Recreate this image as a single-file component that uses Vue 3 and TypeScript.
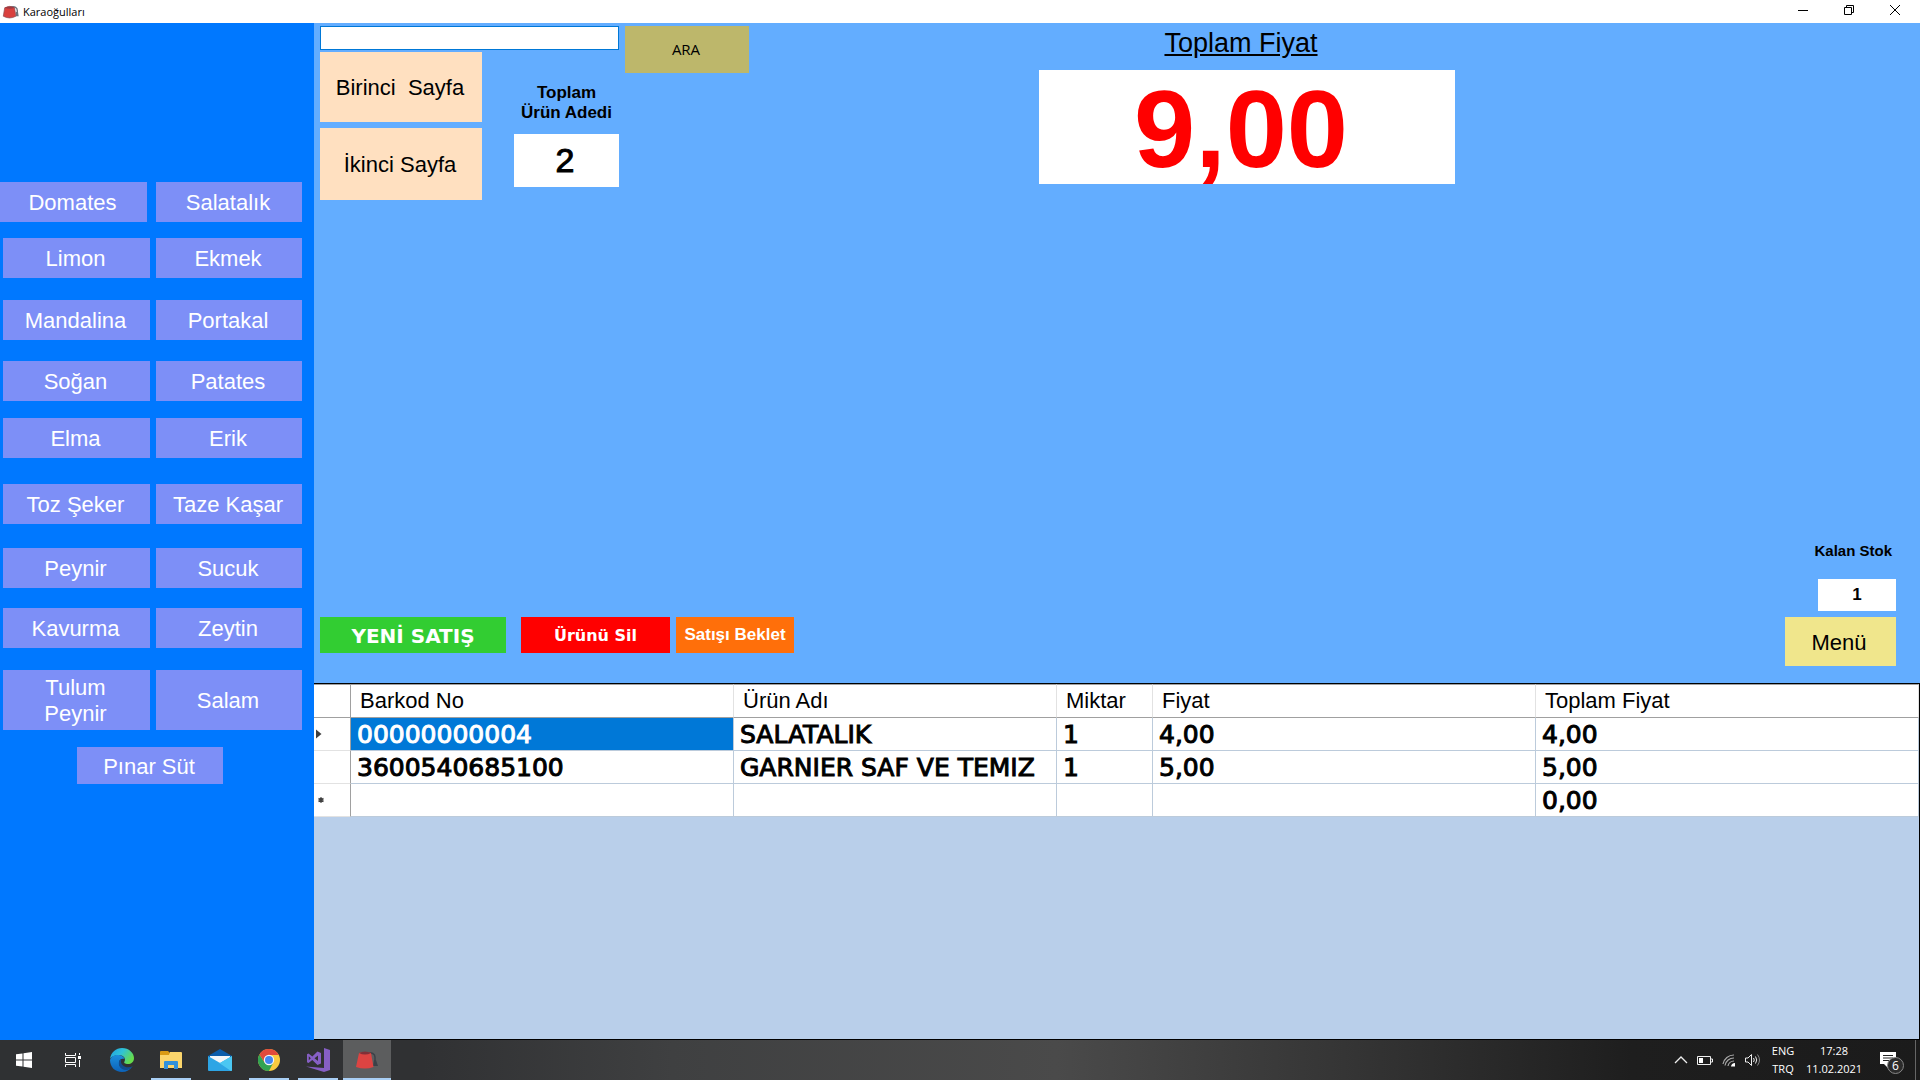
<script setup lang="ts">
import { ref } from 'vue'

interface ProductRow {
  space: number
  items: string[]
  kind?: string
}

interface SaleLine {
  marker: 'current' | 'new' | ''
  barcode: string
  name: string
  quantity: string
  price: string
  total: string
}

const search = ref('')
const itemCount = ref('2')
const grandTotal = ref('9,00')
const stock = ref('1')

const productRows: ProductRow[] = [
  { space: 0, items: ['Domates', 'Salatalık'], kind: 'flush' },
  { space: 16, items: ['Limon', 'Ekmek'] },
  { space: 22, items: ['Mandalina', 'Portakal'] },
  { space: 21, items: ['Soğan', 'Patates'] },
  { space: 17, items: ['Elma', 'Erik'] },
  { space: 26, items: ['Toz Şeker', 'Taze Kaşar'] },
  { space: 24, items: ['Peynir', 'Sucuk'] },
  { space: 20, items: ['Kavurma', 'Zeytin'] },
  { space: 22, items: ['Tulum Peynir', 'Salam'], kind: 'tall' },
  { space: 17, items: ['Pınar Süt'], kind: 'single' },
]

const lines: SaleLine[] = [
  { marker: 'current', barcode: '00000000004', name: 'SALATALIK', quantity: '1', price: '4,00', total: '4,00' },
  { marker: '', barcode: '3600540685100', name: 'GARNIER SAF VE TEMIZ', quantity: '1', price: '5,00', total: '5,00' },
  { marker: 'new', barcode: '', name: '', quantity: '', price: '', total: '0,00' },
]
</script>

<template>
  <div class="desktop">
    <header class="titlebar">
      <svg width="18" height="14" viewBox="0 0 24 20" aria-hidden="true">
        <path d="M11 3Q21 1 21 8V12" fill="none" stroke="#6b747d" stroke-width="2" />
        <path d="M19 10H22L23 16H19Z" fill="#6b747d" />
        <path d="M3 4Q10 0 17 4L19 16Q10 21 1 16Z" fill="#d9403e" stroke="#8b4a50" stroke-width="1" />
        <path d="M3 4Q10 0 17 4Q10 7 3 4Z" fill="#9c3b42" />
      </svg>
      <span class="title">Karaoğulları</span>
      <div class="window-controls">
        <button type="button" aria-label="Simge durumuna küçült">
          <svg width="10" height="10" viewBox="0 0 10 10"><path d="M0 5.5H10" stroke="#000" /></svg>
        </button>
        <button type="button" aria-label="Önceki boyut">
          <svg width="10" height="10" viewBox="0 0 10 10"><path d="M.5 2.5h7v7h-7zM2.5 2.5V.5h7v7h-2" fill="none" stroke="#000" /></svg>
        </button>
        <button type="button" aria-label="Kapat">
          <svg width="10" height="10" viewBox="0 0 10 10"><path d="M0 0L10 10M10 0L0 10" stroke="#000" /></svg>
        </button>
      </div>
    </header>

    <div class="workspace">
      <nav class="products">
        <div
          v-for="row in productRows"
          :key="row.items[0]"
          class="product-row"
          :class="row.kind"
          :style="{ marginTop: row.space + 'px' }"
        >
          <button v-for="item in row.items" :key="item" type="button" class="product">{{ item }}</button>
        </div>
      </nav>

      <main class="main">
        <section class="panel">
          <div class="panel-top">
            <div class="lookup">
              <input v-model="search" class="search" type="text" aria-label="Ürün ara" />
              <div class="lookup-body">
                <div class="pages">
                  <button type="button" class="page">Birinci&nbsp; Sayfa</button>
                  <button type="button" class="page second">İkinci Sayfa</button>
                </div>
                <div class="count">
                  <label for="item-count">Toplam<br />Ürün Adedi</label>
                  <input id="item-count" v-model="itemCount" type="text" readonly />
                </div>
              </div>
            </div>
            <button type="button" class="find">ARA</button>
            <div class="total">
              <label for="grand-total">Toplam Fiyat</label>
              <input id="grand-total" v-model="grandTotal" type="text" readonly />
            </div>
          </div>

          <div class="panel-bottom">
            <div class="actions">
              <button type="button" class="new-sale">YENİ SATIŞ</button>
              <button type="button" class="remove">Ürünü Sil</button>
              <button type="button" class="hold">Satışı Beklet</button>
            </div>
            <div class="stock">
              <label for="stock">Kalan Stok</label>
              <input id="stock" v-model="stock" type="text" readonly />
              <button type="button" class="menu">Menü</button>
            </div>
          </div>
        </section>

        <section class="grid-area">
          <table class="grid">
            <colgroup>
              <col class="col-marker" />
              <col />
              <col class="col-name" />
              <col class="col-quantity" />
              <col />
              <col />
            </colgroup>
            <thead>
              <tr>
                <th class="marker"></th>
                <th>Barkod No</th>
                <th>Ürün Adı</th>
                <th>Miktar</th>
                <th>Fiyat</th>
                <th>Toplam Fiyat</th>
              </tr>
            </thead>
            <tbody>
              <tr v-for="(line, index) in lines" :key="index">
                <td class="marker">
                  <svg v-if="line.marker === 'current'" width="10" height="10" viewBox="0 0 10 10"><path d="M0 0.500L5.500 5L0 9.500Z" fill="#404040" /></svg>
                  <svg v-if="line.marker === 'new'" width="10" height="10" viewBox="0 0 10 10">
                    <path d="M5 2.200V7.800M2.500 3.500L7.500 6.500M7.500 3.500L2.500 6.500" stroke="#404040" stroke-width="1.500" />
                  </svg>
                </td>
                <td :class="{ selected: index === 0 }">{{ line.barcode }}</td>
                <td>{{ line.name }}</td>
                <td>{{ line.quantity }}</td>
                <td>{{ line.price }}</td>
                <td>{{ line.total }}</td>
              </tr>
            </tbody>
          </table>
        </section>
      </main>
    </div>

    <footer class="taskbar">
      <button type="button" class="task" aria-label="Başlat">
        <svg width="16" height="16" viewBox="0 0 16 16"><path d="M0 2.300L6.500 1.400V7.500H0ZM7.500 1.200L16 0V7.500H7.500ZM0 8.500H6.500V14.600L0 13.700ZM7.500 8.500H16V16L7.500 14.800Z" fill="#fff" /></svg>
      </button>
      <button type="button" class="task" aria-label="Görev görünümü">
        <svg width="16" height="16" viewBox="0 0 16 16">
          <path d="M.5 1V3.500H10.500V1M.5 15V12.500H10.500V15M.5 5.500H10.500V10.500H.5ZM14.500 1V3M14.500 8V15" fill="none" stroke="#fff" />
          <rect x="13" y="4" width="3" height="3" fill="#fff" />
        </svg>
      </button>
      <button type="button" class="task" aria-label="Microsoft Edge">
        <svg width="24" height="24" viewBox="0 0 24 24">
          <defs>
            <linearGradient id="edge-top" x1="0" y1="0" x2="1" y2="0.500">
              <stop offset="0" stop-color="#1f9fe0" /><stop offset=".5" stop-color="#2fc2d8" /><stop offset="1" stop-color="#66dc4b" />
            </linearGradient>
            <linearGradient id="edge-low" x1="0" y1="0" x2="0" y2="1">
              <stop offset="0" stop-color="#1c8fdc" /><stop offset="1" stop-color="#0c62b8" />
            </linearGradient>
          </defs>
          <path d="M0 11C1 4 6 0 12 0C19 0 24 5 24 10C24 14 21 16 18 16C15 16 13.500 15 14.500 13.500C16 11 14 7 9 7C5 7 1 9 0 11Z" fill="url(#edge-top)" />
          <path d="M0 12C1 8.500 5 6.500 9 7C12 7.400 14 9 14.500 11C11 10 9 12 9 15C9 19 13 22 18 21C22 20 22 18.500 22.500 18.500C20 22 16.500 24 12 24C5 24 0 19 0 12Z" fill="url(#edge-low)" />
          <path d="M9.200 13C8 17 10 21 15 22C18 22.500 21 20.500 22.600 18.300C19 20 15 19.500 12.500 17C10.500 15 10.800 13 11.500 11.500C10 11.800 9.500 12.300 9.200 13Z" fill="#124c8e" />
        </svg>
      </button>
      <button type="button" class="task open" aria-label="Dosya Gezgini">
        <svg width="22" height="18" viewBox="0 0 22 18">
          <path d="M0 1Q0 0 1 0H8L10 2V5H0Z" fill="#d99a15" />
          <path d="M0 4H9L10 1H21Q22 1 22 2V17H0Z" fill="#fbd56c" />
          <path d="M4 18V11Q4 10 5 10H17Q18 10 18 11V18H14V14H8V18Z" fill="#3191db" />
        </svg>
      </button>
      <button type="button" class="task" aria-label="Posta">
        <svg width="24" height="22" viewBox="0 0 24 22">
          <path d="M0 7L12 0L24 7V10H0Z" fill="#0c5daa" />
          <path d="M2 7H22V15H2Z" fill="#f4f6f8" />
          <path d="M0 7L12 14L24 7V21Q24 22 23 22H1Q0 22 0 21Z" fill="#2da5e5" />
          <path d="M24 7V21Q24 22 23 22L9 12.500L12 14Z" fill="#4bc7f2" />
        </svg>
      </button>
      <button type="button" class="task open" aria-label="Google Chrome">
        <svg width="22" height="22" viewBox="0 0 22 22">
          <circle cx="11" cy="11" r="11" fill="#f9cb3f" />
          <path d="M1.470 5.500A11 11 0 0 0 11 22L15.330 13.500L11 11L6.670 13.500Z" fill="#31a352" />
          <path d="M11 6H20.700A11 11 0 0 0 1.470 5.500L6.670 13.500L11 11Z" fill="#e04a3c" />
          <circle cx="11" cy="11" r="5.200" fill="#f3f5f8" />
          <circle cx="11" cy="11" r="4" fill="#4286f0" />
        </svg>
      </button>
      <button type="button" class="task open" aria-label="Visual Studio">
        <svg width="24" height="24" viewBox="0 0 24 24">
          <path d="M18 0L24 2V22L18 24L0 18.500L18 20Z" fill="#865fc5" />
          <path d="M11.500 3.500L15 5V15.500L11.500 17L6.300 12L2.500 15L1 14.200V6.300L2.500 5.500L6.300 8.500ZM12 7.500L8.500 10.200L12 13ZM2.800 8.200V12.300L4.800 10.200Z" fill="#865fc5" fill-rule="evenodd" />
        </svg>
      </button>
      <button type="button" class="task open active" aria-label="Karaoğulları">
        <svg width="24" height="20" viewBox="0 0 24 20">
          <path d="M11 3Q20 2 20 7V12" fill="none" stroke="#3b4148" stroke-width="1.500" />
          <path d="M19 10H21L23 16H18Z" fill="#3b4148" />
          <path d="M4 3Q10 1 16 3L18.500 17Q10 20 1 17Z" fill="#dc4442" />
          <path d="M4 3Q10 0 16 3Q10 6 4 3Z" fill="#803038" />
        </svg>
      </button>

      <div class="tray">
        <svg width="14" height="10" viewBox="0 0 14 10"><path d="M1 8L7 2L13 8" fill="none" stroke="#eee" stroke-width="1.300" /></svg>
        <svg width="16" height="10" viewBox="0 0 16 10"><path d="M.5 1.500H13.500V9.500H.5ZM14 4H15.500V7H14" fill="none" stroke="#eee" /><rect x="2" y="3" width="4" height="5" fill="#fff" /></svg>
        <svg width="14" height="14" viewBox="0 0 14 14">
          <path d="M1 11A11 11 0 0 1 12 2M3 12.500A9 9 0 0 1 12 5M6 13A6 6 0 0 1 12 8" fill="none" stroke="#aaa" stroke-width="1.200" />
          <path d="M9 13.500A4 4 0 0 1 13 10V13.500Z" fill="#fff" />
        </svg>
        <svg width="16" height="14" viewBox="0 0 16 14">
          <path d="M.5 5H3L6.500 1.500V12.500L3 9H.5Z" fill="none" stroke="#eee" />
          <path d="M8.500 5Q10 7 8.500 9M10.500 3.500Q13 7 10.500 10.500" fill="none" stroke="#eee" />
          <path d="M12.500 1.500Q16.500 7 12.500 12.500" fill="none" stroke="#888" />
        </svg>
        <div class="tray-text language"><span>ENG</span><span>TRQ</span></div>
        <div class="tray-text clock"><span>17:28</span><span>11.02.2021</span></div>
        <div class="notice">
          <svg width="17" height="17" viewBox="0 0 17 17"><path d="M0 0H16V12H8V16L4 12H0Z" fill="#fff" /><path d="M3 3.500H13M3 6H13M3 8.500H9" stroke="#222" /></svg>
          <span class="badge">6</span>
        </div>
        <div class="show-desktop"></div>
      </div>
    </footer>
  </div>
</template>

<style>
body {
  margin: 0;
}
</style>

<style scoped>
.desktop {
  display: flex;
  flex-direction: column;
  min-height: 100vh;
  font-family: "Liberation Sans", Arial, sans-serif;
  color: #000;
}

.desktop *,
.desktop *::before {
  box-sizing: border-box;
}

button,
input {
  margin: 0;
  padding: 0;
  border: 0;
  border-radius: 0;
  font: inherit;
  color: inherit;
}

svg {
  display: block;
}

.titlebar {
  display: flex;
  align-items: center;
  height: 23px;
  padding: 0 2px;
  background: #fff;
  font: 11px/16px "Open Sans", "Noto Sans", sans-serif;
}

.title {
  margin-left: 3px;
}

.window-controls {
  display: flex;
  align-self: stretch;
  align-items: stretch;
  margin-left: auto;
}

.window-controls button {
  display: flex;
  justify-content: center;
  align-items: center;
  width: 46px;
  padding-bottom: 3px;
  background: none;
}

.workspace {
  display: flex;
  flex: 1;
}

.products {
  flex: none;
  width: 314px;
  padding-top: 159px;
  background: #0078ff;
}

.product-row {
  display: grid;
  grid-template-columns: 147px 146px;
  column-gap: 6px;
  grid-auto-rows: 40px;
  padding-left: 3px;
}

.product-row.flush {
  padding-left: 0;
  column-gap: 9px;
}

.product-row.tall {
  grid-auto-rows: 60px;
}

.product-row.single {
  grid-template-columns: 146px;
  grid-auto-rows: 37px;
  padding-left: 77px;
}

.product {
  padding: 2px 2px 0 0;
  background: #7d8ff7;
  color: #fff;
  font-size: 22px;
  line-height: 26px;
  white-space: nowrap;
}

.tall .product {
  padding: 2px 34px 0 32px;
  white-space: normal;
}

.main {
  display: flex;
  flex: 1;
  flex-direction: column;
  min-width: 0;
}

.panel {
  display: flex;
  flex: 640 1 0;
  flex-direction: column;
  justify-content: space-between;
  padding: 3px 24px 17px 6px;
  background: #63adff;
}

.panel-top {
  display: grid;
  grid-template-columns: 299px 124px 278fr 416px 435fr;
  column-gap: 6px;
  align-items: start;
}

.search {
  display: block;
  width: 100%;
  height: 24px;
  padding: 0 4px;
  border: 1px solid #0078d7;
  background: #fff;
  font-size: 16px;
}

.lookup-body {
  display: flex;
  justify-content: space-between;
  margin-top: 2px;
}

.pages {
  display: flex;
  flex-direction: column;
  gap: 6px;
  width: 162px;
}

.page {
  height: 70px;
  padding: 2px 2px 0 0;
  background: #ffe0c0;
  font-size: 22px;
}

.page.second {
  height: 72px;
}

.count {
  display: flex;
  flex-direction: column;
  gap: 11px;
  width: 105px;
  padding-top: 31px;
  text-align: center;
  font-size: 17px;
  font-weight: bold;
  line-height: 20px;
}

.count input {
  width: 100%;
  height: 53px;
  padding-right: 3px;
  background: #fff;
  font-size: 34px;
  font-weight: normal;
  text-align: center;
  -webkit-text-stroke: 1px #000;
}

.find {
  height: 47px;
  padding: 0 2px 2px 0;
  background: #bdb76b;
  font-family: "Open Sans", "Noto Sans", sans-serif;
  font-size: 15px;
}

.total {
  display: flex;
  grid-column: 4;
  flex-direction: column;
  gap: 10px;
  text-align: center;
}

.total label {
  padding-right: 12px;
  font-size: 27px;
  line-height: 34px;
  text-decoration: underline;
}

.total input {
  width: 100%;
  height: 114px;
  padding: 2px 12px 0 0;
  background: #fff;
  color: #f00;
  font-size: 110px;
  font-weight: bold;
  text-align: center;
}

.panel-bottom {
  display: flex;
  justify-content: space-between;
  align-items: flex-end;
}

.actions {
  display: flex;
  margin-bottom: 13px;
  color: #fff;
  font-weight: bold;
  white-space: nowrap;
}

.actions button {
  height: 36px;
}

.new-sale {
  width: 186px;
  padding-top: 2px;
  background: #32cd32;
  font-family: "DejaVu Sans", Verdana, sans-serif;
  font-size: 20px;
}

.actions .remove {
  width: 149px;
  margin: 0 6px 0 15px;
  background: #f00;
  font-family: "DejaVu Sans", Verdana, sans-serif;
  font-size: 16px;
}

.hold {
  width: 118px;
  background: #ff6f0a;
  font-size: 17px;
}

.stock {
  display: flex;
  flex-direction: column;
  align-items: flex-end;
  gap: 6px;
}

.stock label {
  margin: 0 4px 12px 0;
  font-size: 15px;
  font-weight: bold;
  line-height: 20px;
}

.stock input {
  width: 78px;
  height: 32px;
  background: #fff;
  font-size: 17px;
  font-weight: bold;
  text-align: center;
}

.menu {
  width: 111px;
  height: 49px;
  padding: 2px 3px 0 0;
  background: #f0e68c;
  font-size: 22px;
}

.grid-area {
  flex: 355 1 0;
  border: solid #000;
  border-width: 1px 1px 1px 0;
  background: #b9cfea;
}

.grid {
  width: 100%;
  border-collapse: separate;
  border-spacing: 0;
  table-layout: fixed;
  background: #fff;
}

.col-marker {
  width: 37px;
}

.col-name {
  width: 323px;
}

.col-quantity {
  width: 96px;
}

th {
  height: 34px;
  padding: 0 0 0 9px;
  border-top: 1px solid #a0a0a0;
  border-right: 1px solid #e2e2e2;
  border-bottom: 1px solid #a0a0a0;
  font-size: 22px;
  font-weight: normal;
  text-align: left;
}

td {
  height: 33px;
  padding: 2px 0 0 6px;
  border-right: 1px solid #bccbdb;
  border-bottom: 1px solid #bccbdb;
  font-family: "DejaVu Sans", Verdana, sans-serif;
  font-size: 25px;
  line-height: 30px;
  white-space: nowrap;
  -webkit-text-stroke: 1px currentColor;
}

th.marker,
td.marker {
  padding: 0 0 0 2px;
  border-right-color: #a0a0a0;
}

td.marker {
  border-bottom-color: #e2e2e2;
}

td.selected {
  background: #0078d7;
  color: #fff;
}

.taskbar {
  display: flex;
  gap: 1px;
  height: 40px;
  background: linear-gradient(90deg, #2f3133 0%, #303133 22%, #3f4041 35%, #4a4a4a 55%, #353535 70%, #1e1e1e 85%, #1b1b1b 100%);
  color: #fff;
}

.task {
  position: relative;
  display: flex;
  justify-content: center;
  align-items: center;
  width: 48px;
  background: none;
}

.task.active {
  background: #5c5d5e;
}

.task.open::before {
  content: "";
  position: absolute;
  right: 4px;
  bottom: 0;
  left: 4px;
  height: 2px;
  background: #a9cff5;
}

.task.active::before {
  right: 0;
  left: 0;
}

.tray {
  display: flex;
  align-items: center;
  gap: 9px;
  margin-left: auto;
}

.tray-text {
  display: flex;
  flex-direction: column;
  font: 11px/18px "Open Sans", "Noto Sans", sans-serif;
  text-align: center;
}

.language {
  width: 26px;
}

.clock {
  width: 58px;
  margin-right: 8px;
}

.notice {
  position: relative;
  width: 26px;
}

.badge {
  position: absolute;
  top: 5px;
  left: 7px;
  width: 17px;
  height: 17px;
  border: 1px solid #888;
  border-radius: 50%;
  background: #2b2b2b;
  font: 12px/15px "Open Sans", "Noto Sans", sans-serif;
  text-align: center;
}

.show-desktop {
  align-self: stretch;
  width: 5px;
  border-left: 1px solid #666;
}
</style>
